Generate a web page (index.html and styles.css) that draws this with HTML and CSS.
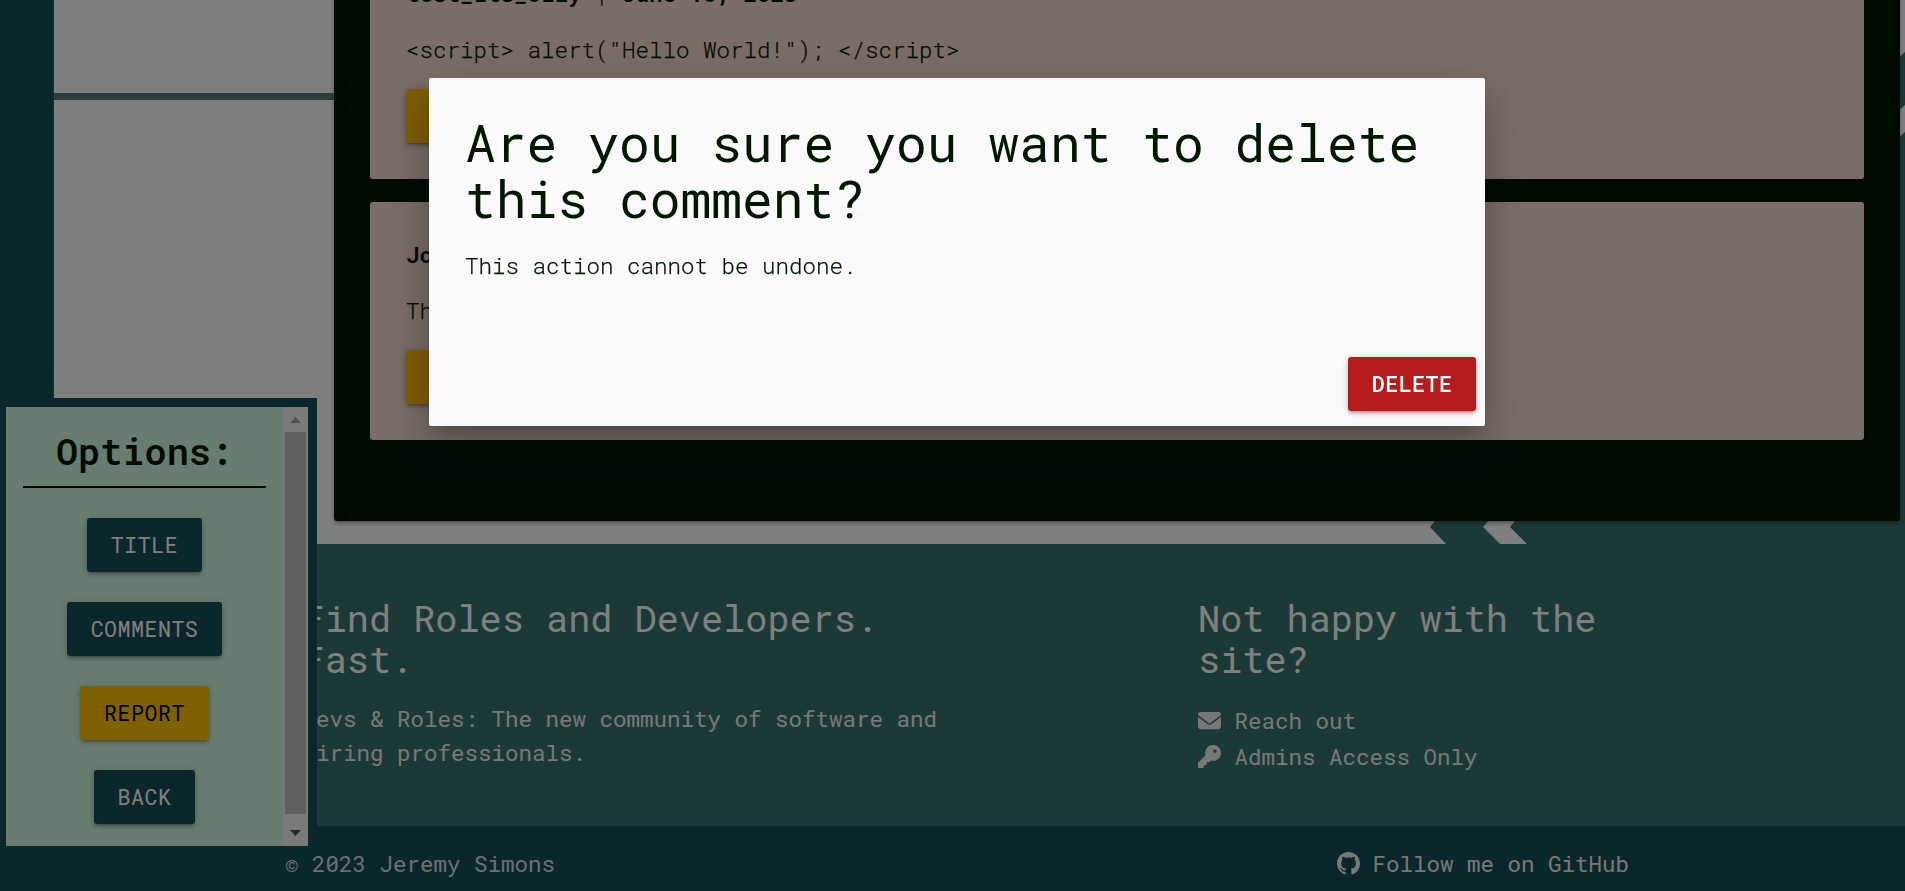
FILE: index.html
```html
<!DOCTYPE html>
<html lang="en">
<head>
<meta charset="utf-8">
<title>Devs &amp; Roles</title>
<link rel="stylesheet" href="styles.css">
</head>
<body>
<div class="page">
  <div class="stage">
    <div class="rail"></div>
    <div class="content">
      <svg class="backdrop" width="1851" height="544" viewBox="54 0 1851 544">
        <path fill="#567f7c" d="M54 93h280v7H54z"/>
        <path fill="#36746e" d="M1895 61l10-9v53l-10 9z"/>
        <path fill="#36746e" d="M1895 141l10-9v412h-10z"/>
        <path fill="#36746e" d="M1442 513l-12 14 16 17h54l-17-17 12-14z"/>
        <path fill="#36746e" d="M1522 513l-12 14 17 17h378v-31z"/>
      </svg>
      <main class="board">
        <article class="comment">
          <p><b>test_its_olly</b> | <b>June 10, 2023</b></p>
          <p>&lt;script&gt; alert("Hello World!"); &lt;/script&gt;</p>
          <button class="btn amber" aria-label="Options"></button>
        </article>
        <article class="comment">
          <p><b>John</b></p>
          <p>This</p>
          <button class="btn amber" aria-label="Options"></button>
        </article>
      </main>
    </div>
  </div>
  <footer class="footer">
    <section class="about">
      <h5>Find Roles and Developers. Fast.</h5>
      <p>Devs &amp; Roles: The new community of software and hiring professionals.</p>
    </section>
    <section class="contact">
      <h5>Not happy with the site?</h5>
      <a class="link"><svg width="23" height="23" viewBox="0 0 512 512"><path fill="currentColor" d="M48 64C21.500 64 0 85.500 0 112c0 15.100 7.100 29.300 19.200 38.400L236.800 313.600c11.400 8.500 27 8.500 38.400 0L492.800 150.400c12.100-9.100 19.200-23.300 19.200-38.400c0-26.500-21.500-48-48-48H48zM0 176V384c0 35.300 28.700 64 64 64H448c35.300 0 64-28.700 64-64V176L294.400 339.200c-22.800 17.100-54 17.100-76.800 0L0 176z"/></svg><span>Reach out</span></a>
      <a class="link"><svg width="23" height="23" viewBox="0 0 512 512"><path fill="currentColor" d="M336 352c97.200 0 176-78.800 176-176S433.200 0 336 0S160 78.800 160 176c0 18.700 2.900 36.800 8.300 53.700L7 391c-4.500 4.500-7 10.600-7 17v80c0 13.300 10.700 24 24 24h80c13.300 0 24-10.700 24-24V448h40c13.300 0 24-10.700 24-24V384h40c6.400 0 12.500-2.500 17-7l33.300-33.300c16.900 5.400 35 8.300 53.700 8.300zM376 96a40 40 0 1 1 0 80 40 40 0 1 1 0-80z"/></svg><span>Admins Access Only</span></a>
    </section>
  </footer>
  <div class="copyright">
    <span>© 2023 Jeremy Simons</span>
    <a class="link github"><svg width="23" height="23" viewBox="0 0 16 16"><path fill="currentColor" d="M8 0C3.580 0 0 3.580 0 8c0 3.540 2.290 6.530 5.470 7.590.4.070.55-.17.55-.38 0-.19-.01-.82-.01-1.490-2.010.37-2.530-.49-2.690-.94-.09-.23-.48-.94-.82-1.130-.28-.15-.68-.52-.01-.53.63-.01 1.080.58 1.230.82.72 1.210 1.870.87 2.330.66.07-.52.28-.87.51-1.070-1.780-.2-3.640-.89-3.640-3.950 0-.87.31-1.590.82-2.150-.08-.2-.36-1.020.08-2.120 0 0 .67-.21 2.200.82.64-.18 1.320-.27 2-.27s1.360.09 2 .27c1.530-1.040 2.200-.82 2.200-.82.44 1.100.16 1.920.08 2.120.51.56.82 1.270.82 2.150 0 3.070-1.870 3.750-3.650 3.950.29.25.54.73.54 1.480 0 1.070-.01 1.930-.01 2.200 0 .21.15.46.55.38A8.010 8.010 0 0 0 16 8c0-4.420-3.580-8-8-8z"/></svg><span>Follow me on GitHub</span></a>
  </div>
</div>

<aside class="options">
  <div class="options-list">
    <h4>Options:</h4>
    <button class="btn">TITLE</button>
    <button class="btn">COMMENTS</button>
    <button class="btn amber">REPORT</button>
    <button class="btn">BACK</button>
  </div>
  <div class="scrollbar">
    <svg width="25" height="25" viewBox="0 0 25 25"><path fill="#a3a3a3" d="M7 16l5.500-6 5.500 6z"/></svg>
    <div class="thumb"></div>
    <svg width="25" height="32" viewBox="0 0 25 32"><path fill="#505050" d="M7 16l5.500 6 5.500-6z"/></svg>
  </div>
</aside>

<div class="overlay"></div>
<div class="modal" role="dialog">
  <div class="modal-body">
    <h4>Are you sure you want to delete this comment?</h4>
    <p>This action cannot be undone.</p>
  </div>
  <div class="modal-footer"><button class="btn danger">DELETE</button></div>
</div>
</body>
</html>
```

FILE: styles.css
```css
* { box-sizing: border-box; }
body {
  margin: 0;
  height: 891px;
  overflow: hidden;
  background: #fff;
  color: #001800;
  font: 300 22.5px/33.75px "Roboto Mono", "Liberation Mono", monospace;
}
h4, h5, p { margin: 0; }
h4, h5 { font-weight: 400; }
b { font-weight: 700; }
.page { display: flex; flex-direction: column; height: 891px; }
.stage { display: flex; height: 544px; overflow: hidden; }
.rail { width: 54px; background: #145056; border-right: 1px solid #36605f; }
.content {
  position: relative;
  flex: 1;
  display: flex;
  flex-direction: column;
  justify-content: flex-end;
  padding: 0 5px 23px 280px;
}
.backdrop { position: absolute; left: 0; top: 0; }
.board {
  position: relative;
  display: flex;
  flex-direction: column;
  gap: 23px;
  padding: 36px 36px 81px;
  background: #001600;
  border-radius: 3px;
  box-shadow: 0 3px 3px rgba(0,0,0,.14), 0 4px 1px -3px rgba(0,0,0,.12), 0 1px 7px rgba(0,0,0,.2);
}
.comment {
  height: 238px;
  padding: 36px;
  border-radius: 3px;
  background: #f6dad0;
}
.comment p { margin-bottom: 22px; }
.comment p, .modal p { -webkit-text-stroke: .25px currentColor; }
.comment b { -webkit-text-stroke: 0; }
.comment .btn { width: 143px; }
.btn {
  display: block;
  height: 54px;
  padding: 0 23.5px;
  border: 0;
  border-radius: 3px;
  background: #145056;
  color: #fff;
  font: 400 21.600px/54px "Roboto Mono", "Liberation Mono", monospace;
  letter-spacing: .5px;
  box-shadow: 0 3px 3px rgba(0,0,0,.14), 0 4px 1px -3px rgba(0,0,0,.12), 0 1px 7px rgba(0,0,0,.2);
}
.btn.amber { background: #ffc107; color: #000; }
.options .amber { padding: 0 24px; }
.btn.danger { background: #b71c1c; font-weight: 500; }
.footer {
  display: grid;
  grid-template-columns: 640px 440px;
  column-gap: 255.500px;
  height: 282px;
  padding: 54px 0 0 302.500px;
  background: #36746e;
  color: #fff;
}
h5 { font-size: 36.900px; line-height: 40.600px; }
.about p { margin-top: 23px; color: #f0f0f0; font-weight: 400; }
.contact .link { margin-bottom: 2.250px; }
.contact h5 { margin-bottom: 24.500px; }
.link { display: flex; align-items: center; gap: 13.500px; color: #f0f0f0; font-weight: 400; }
.copyright {
  display: flex;
  align-items: center;
  justify-content: space-between;
  height: 65px;
  padding: 10px 276px 0 285px;
  background: #145056;
  color: #d4e2e3;
  font-weight: 400;
}
.copyright .link { gap: 12px; }
.options {
  position: fixed;
  left: 0;
  top: 398px;
  display: flex;
  width: 317px;
  height: 457px;
  padding: 9px 9px 9px 6px;
  background: #145056;
}
.options-list {
  flex: 1;
  display: flex;
  flex-direction: column;
  align-items: center;
  gap: 30px;
  padding: 24px 17px 0;
  background: #d0f8e0;
}
.options h4 {
  align-self: stretch;
  height: 57px;
  border-bottom: 2px solid #001600;
  text-align: center;
  font-size: 36.900px;
  line-height: 40.600px;
  font-weight: 600;
}
.scrollbar { display: flex; flex-direction: column; width: 25px; background: #f5f5f5; }
.thumb { flex: 1; margin: 0 2px; background: #c1c1c1; }
.overlay { position: fixed; inset: 0; background: rgba(0,0,0,.5); }
.modal {
  position: fixed;
  left: 429px;
  top: 78px;
  display: flex;
  flex-direction: column;
  width: 1056px;
  height: 348px;
  padding: 36px 9px 15px 36px;
  border-radius: 2px;
  background: #fafafa;
  box-shadow: 0 24px 38px 3px rgba(0,0,0,.14), 0 9px 46px 8px rgba(0,0,0,.12), 0 11px 15px -7px rgba(0,0,0,.2);
}
.modal-body { flex: 1; }
.modal h4 { font-size: 51.300px; line-height: 56.430px; margin-bottom: 22px; }
.modal-footer { display: flex; justify-content: flex-end; }
```
